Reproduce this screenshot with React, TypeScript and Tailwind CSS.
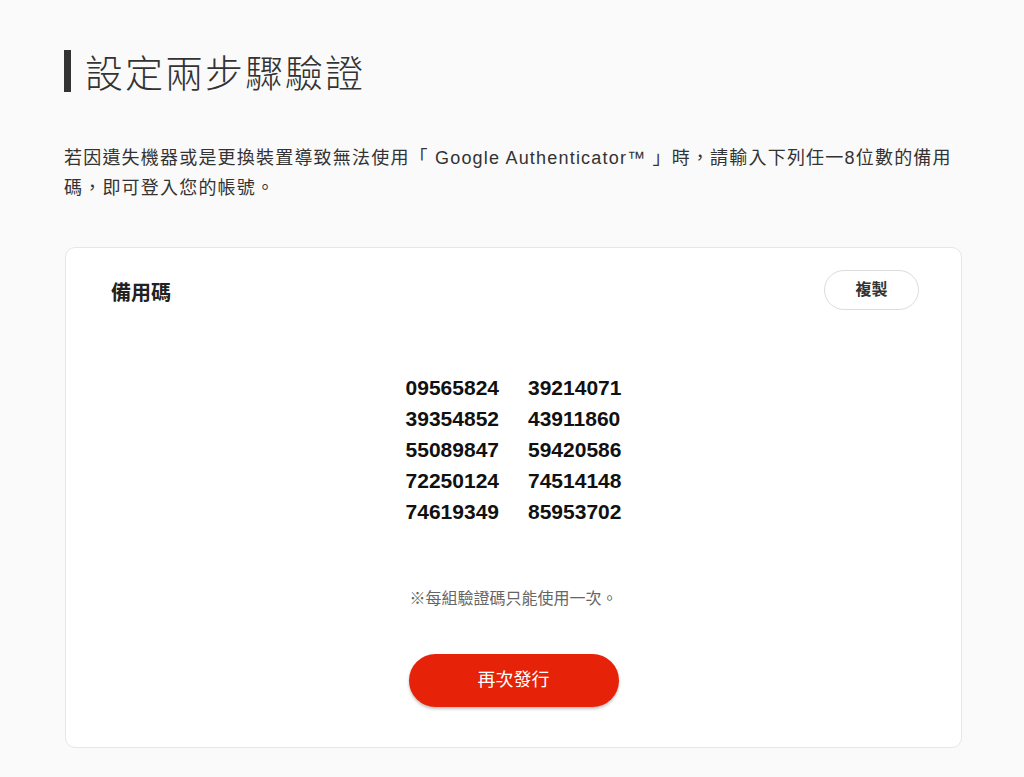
import React from "react";

const codes = [
  ["09565824", "39214071"],
  ["39354852", "43911860"],
  ["55089847", "59420586"],
  ["72250124", "74514148"],
  ["74619349", "85953702"],
];

const cjk = { fontFamily: '"Liberation Sans", "Noto Sans CJK TC", sans-serif' };

export default function App() {
  return (
    <div className="min-h-[777px] w-[1024px] bg-[#fafafa] text-[#333]" style={cjk}>
      <div className="pl-[64px] pr-[63px] pt-[49px]">
        <div className="flex items-start gap-[14px]">
          <div className="mt-[1px] h-[42px] w-[7px] bg-[#333]" />
          <h1 className="pt-[2px] text-[38px] font-light leading-[46px] tracking-[2px] text-[#333]">設定兩步驟驗證</h1>
        </div>
        <p className="mt-[46px] text-[18px] leading-[30px] tracking-[1.2px] text-[#333]">
          若因遺失機器或是更換裝置導致無法使用「 Google Authenticator™ 」時，請輸入下列任一8位數的備用
          <br />
          碼，即可登入您的帳號。
        </p>
        <div className="mt-[44px] ml-[1px] h-[501px] w-[897px] rounded-[10px] border border-[#e6e6e6] bg-white px-[45px] pt-[21px]">
          <div className="flex items-center justify-between">
            <h2 className="pt-[4px] text-[20px] font-bold leading-[40px] text-[#222]">備用碼</h2>
            <button className="mr-[-3px] mt-[-2px] h-[40px] w-[95px] rounded-full border border-[#dcdcdc] bg-white text-[16px] font-bold text-[#333]">
              複製
            </button>
          </div>
          <div className="mt-[59px] flex justify-center">
            <div className="grid grid-cols-[auto_auto] gap-x-[29px] text-[21px] font-bold leading-[31px] text-[#111]" style={{ fontFamily: '"Liberation Sans", Arial, sans-serif' }}>
              {codes.map(([a, b]) => (
                <React.Fragment key={a}>
                  <span>{a}</span>
                  <span>{b}</span>
                </React.Fragment>
              ))}
            </div>
          </div>
          <p className="mt-[60px] text-center text-[16px] leading-[24px] text-[#666]">※每組驗證碼只能使用一次。</p>
          <div className="mt-[43px] flex justify-center">
            <button className="h-[53px] w-[210px] rounded-full bg-[#e62208] text-[18px] text-white shadow-[0_2px_3px_rgba(0,0,0,0.25)]">
              再次發行
            </button>
          </div>
        </div>
      </div>
    </div>
  );
}
